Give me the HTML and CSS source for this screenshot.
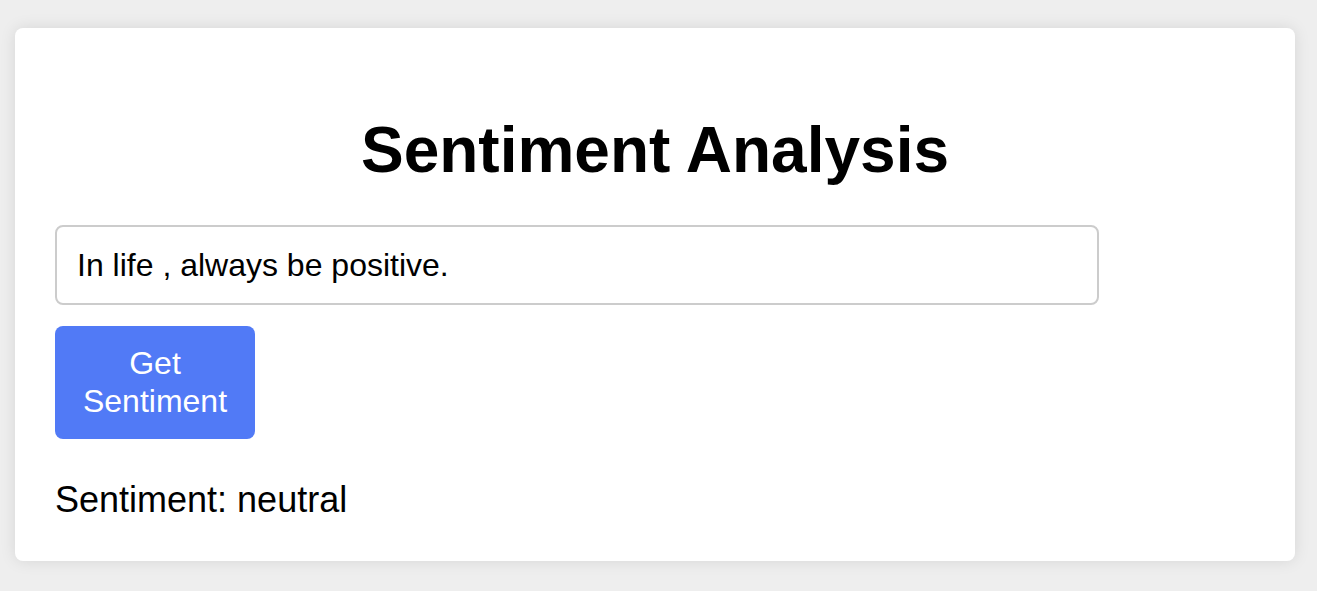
FILE: index.html
```html
<!DOCTYPE html>
<html lang="en">
<head>
<meta charset="utf-8">
<title>Sentiment Analysis</title>
<link rel="stylesheet" href="styles.css">
</head>
<body>
  <main class="card">
    <h1 class="title">Sentiment Analysis</h1>
    <input class="text-input" type="text" value="In life , always be positive.">
    <button class="btn" type="button">Get Sentiment</button>
    <p class="result">Sentiment: neutral</p>
  </main>
</body>
</html>
```
FILE: styles.css
```css
html, body {
  margin: 0;
  padding: 0;
}
body {
  background: #eeeeee;
  font-family: "Liberation Sans", Arial, sans-serif;
  padding: 28px 0 0 15px;
  height: 591px;
  box-sizing: border-box;
  overflow: hidden;
}
.card {
  width: 1280px;
  box-sizing: border-box;
  background: #ffffff;
  border-radius: 8px;
  box-shadow: 0 0 16px rgba(0, 0, 0, 0.1);
  padding: 40px 40px 41px;
  display: flex;
  flex-direction: column;
  align-items: flex-start;
}
.card > * {
  flex-shrink: 0;
}
.title {
  align-self: stretch;
  text-align: center;
  font-size: 64px;
  line-height: 74px;
  font-weight: bold;
  color: #000;
  margin: 45px 0 38px;
}
.text-input {
  width: 1044px;
  height: 80px;
  box-sizing: border-box;
  border: 2px solid #cccccc;
  border-radius: 8px;
  padding: 0 20px;
  font-family: "Liberation Sans", Arial, sans-serif;
  font-size: 32px;
  color: #000;
  background: #fff;
  margin: 0;
  outline: none;
}
.btn {
  width: 200px;
  box-sizing: border-box;
  margin: 21px 0 0;
  padding: 19px 20px;
  border: none;
  border-radius: 8px;
  background: #517af6;
  color: #ffffff;
  font-family: "Liberation Sans", Arial, sans-serif;
  font-size: 32px;
  line-height: 37.5px;
  text-align: center;
}
.result {
  margin: 40px 0 0;
  font-size: 36px;
  line-height: 41px;
  color: #000;
}
```
